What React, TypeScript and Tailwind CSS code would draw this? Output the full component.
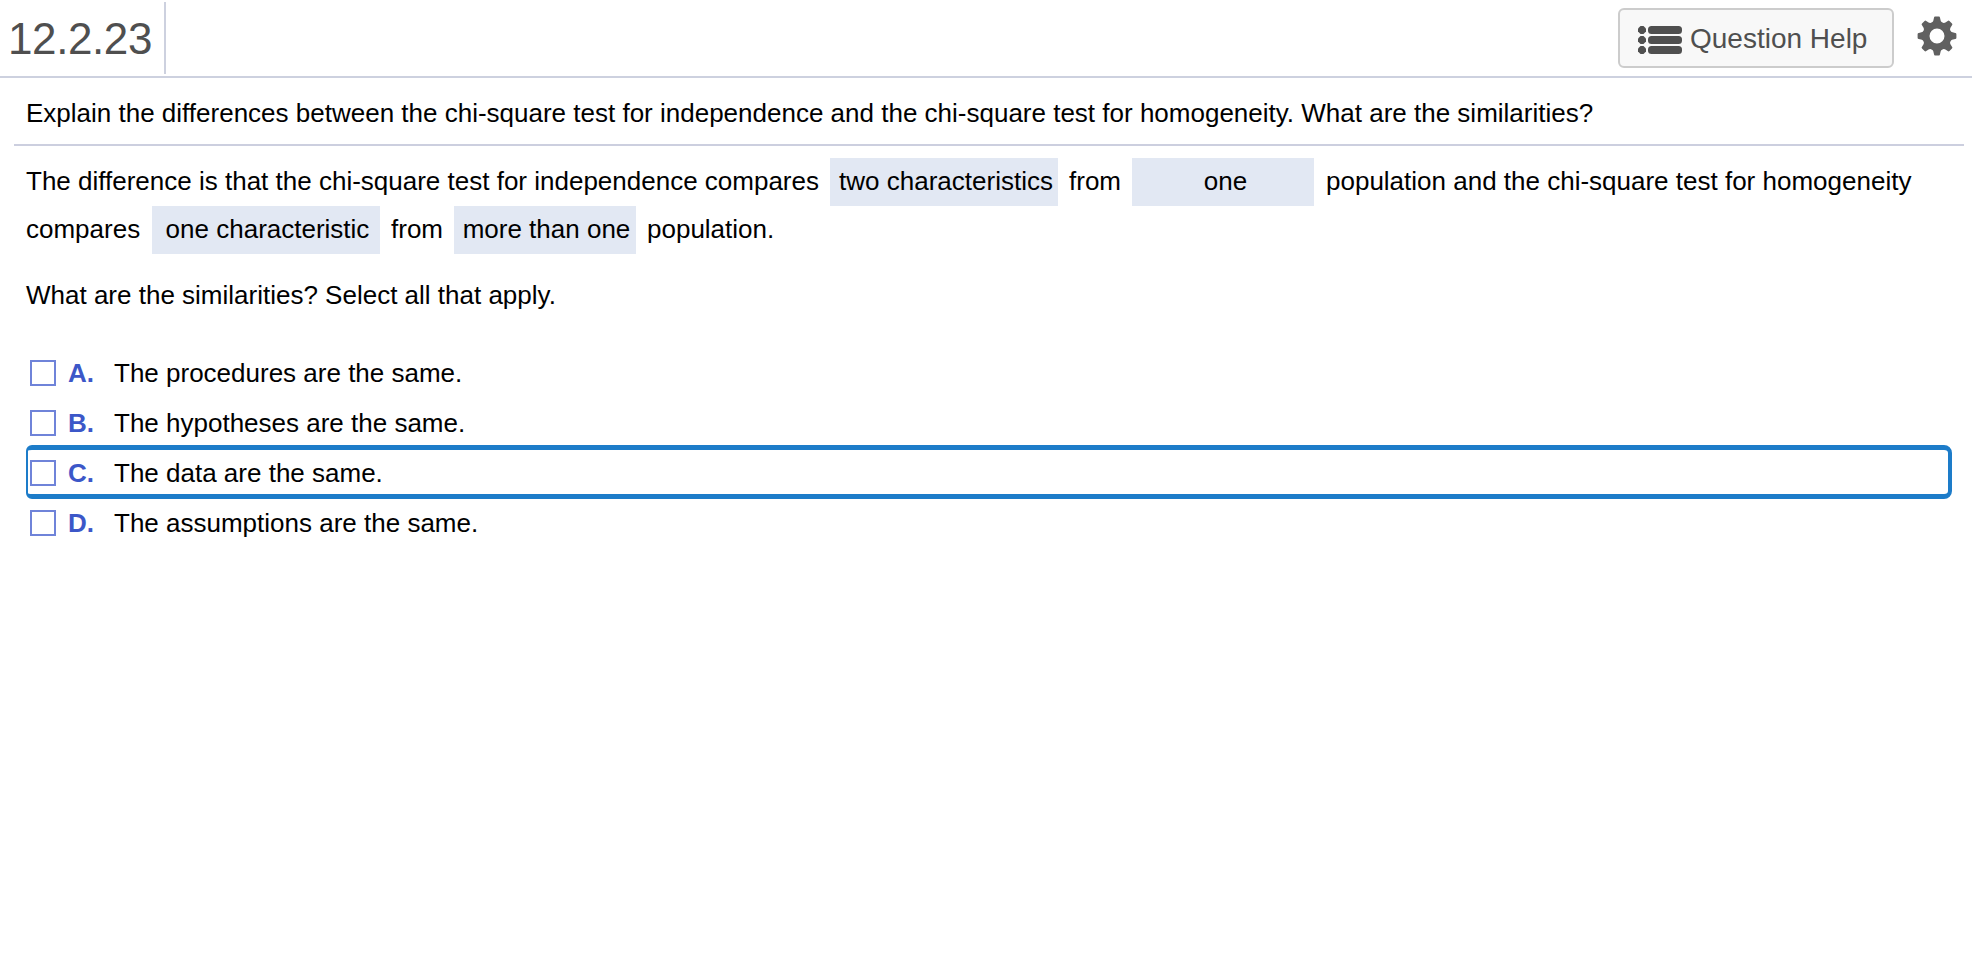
import { useState } from "react";

interface Choice {
  id: string;
  text: string;
}

const choices: Choice[] = [
  { id: "A", text: "The procedures are the same." },
  { id: "B", text: "The hypotheses are the same." },
  { id: "C", text: "The data are the same." },
  { id: "D", text: "The assumptions are the same." },
];

function ListIcon() {
  return (
    <svg className="mt-1" width="44" height="28" viewBox="0 0 44 28" fill="#4f4f4f">
      {[4, 14, 24].map((y) => (
        <g key={y}>
          <path d={`M2.5 ${y - 4}h3l2.5 2.5v3l-2.5 2.5h-3l-2.5 -2.5v-3z`} />
          <rect x="10" y={y - 4} width="34" height="8" rx="3.5" />
        </g>
      ))}
    </svg>
  );
}

function GearIcon() {
  return (
    <svg width="40" height="40" viewBox="-20 -20 40 40" fill="#606060">
      {[0, 45, 90, 135, 180, 225, 270, 315].map((angle) => (
        <path
          key={angle}
          d="M-6 -12Q-3 -15 -3 -18.2Q-3 -19.4 -1.8 -19.4H1.8Q3 -19.4 3 -18.2Q3 -15 6 -12Z"
          transform={`rotate(${angle})`}
        />
      ))}
      <circle r="11" fill="none" stroke="#606060" strokeWidth="7" />
    </svg>
  );
}

export default function App() {
  const [checked, setChecked] = useState<string[]>([]);
  const [focused, setFocused] = useState("C");

  const toggle = (id: string) => {
    setFocused(id);
    setChecked((prev) => (prev.includes(id) ? prev.filter((c) => c !== id) : [...prev, id]));
  };

  return (
    <div className="min-h-screen bg-white font-['Liberation_Sans',Arial,sans-serif] text-[26px] leading-[48px] text-black">
      {/* Header */}
      <header className="flex h-[78px] justify-between border-b-2 border-[#cdd1df] text-[#4f4f4f]">
        <div className="mt-0.5 h-[72px] w-[166px] border-r-2 border-[#cdd1df] pl-2 text-[44px] leading-[74px] tracking-[-0.4px]">
          12.2.23
        </div>
        <div className="flex pr-[15px] pt-2">
          <button className="flex h-[60px] w-[276px] items-center gap-2 rounded-md border-2 border-[#cccccc] bg-[#f8f8f8] pl-[18px] text-[28px]">
            <ListIcon />
            <span className="pt-0.5">Question Help</span>
          </button>
          <button className="ml-[23px] mt-2 h-10" aria-label="Settings">
            <GearIcon />
          </button>
        </div>
      </header>

      {/* Question */}
      <div className="ml-3.5 mr-2 h-[68px] border-b-2 border-[#cccfdf] pl-3 pt-[11px]">
        Explain the differences between the chi-square test for independence and the chi-square test for homogeneity. What are the similarities?
      </div>

      <main className="pl-[26px] pr-5 pt-3">
        <div className="flex h-12 whitespace-pre leading-[46px]">
          <span className="w-[804px]">The difference is that the chi-square test for independence compares</span>
          <span className="w-[228px] bg-[#e2e8f3] pl-1 text-center">two characteristics</span>
          <span className="w-[74px] pl-[11px]">from</span>
          <span className="w-[182px] bg-[#e2e8f3] pl-[5px] text-center">one</span>
          <span className="pl-3">population and the chi-square test for homogeneity</span>
        </div>
        <div className="flex h-12 whitespace-pre leading-[46px]">
          <span className="w-[126px]">compares</span>
          <span className="w-[228px] bg-[#e2e8f3] pl-[3px] text-center">one characteristic</span>
          <span className="w-[74px] pl-[11px]">from</span>
          <span className="w-[182px] bg-[#e2e8f3] pl-[3px] text-center">more than one</span>
          <span className="pl-[11px]">population.</span>
        </div>

        <p className="pt-[17px]">What are the similarities? Select all that apply.</p>

        {/* Answer choices */}
        <div className="pt-[29px]">
          {choices.map((choice) => (
            <div
              key={choice.id}
              onClick={() => toggle(choice.id)}
              className="relative flex h-[50px] items-center"
            >
              {focused === choice.id && (
                <div className="pointer-events-none absolute inset-x-0 -bottom-px -top-[3px] rounded-l-md rounded-r-lg border-y-[5px] border-l-2 border-r-4 border-[#1d7cc9]" />
              )}
              <span className="ml-1 flex h-[26px] w-[26px] items-center justify-center border-2 border-[#6f83d9] text-base text-[#3c57c8]">
                {checked.includes(choice.id) && "✓"}
              </span>
              <span className="ml-3 w-[46px] font-bold text-[#3c57c8]">{choice.id}.</span>
              <span>{choice.text}</span>
            </div>
          ))}
        </div>
      </main>
    </div>
  );
}
